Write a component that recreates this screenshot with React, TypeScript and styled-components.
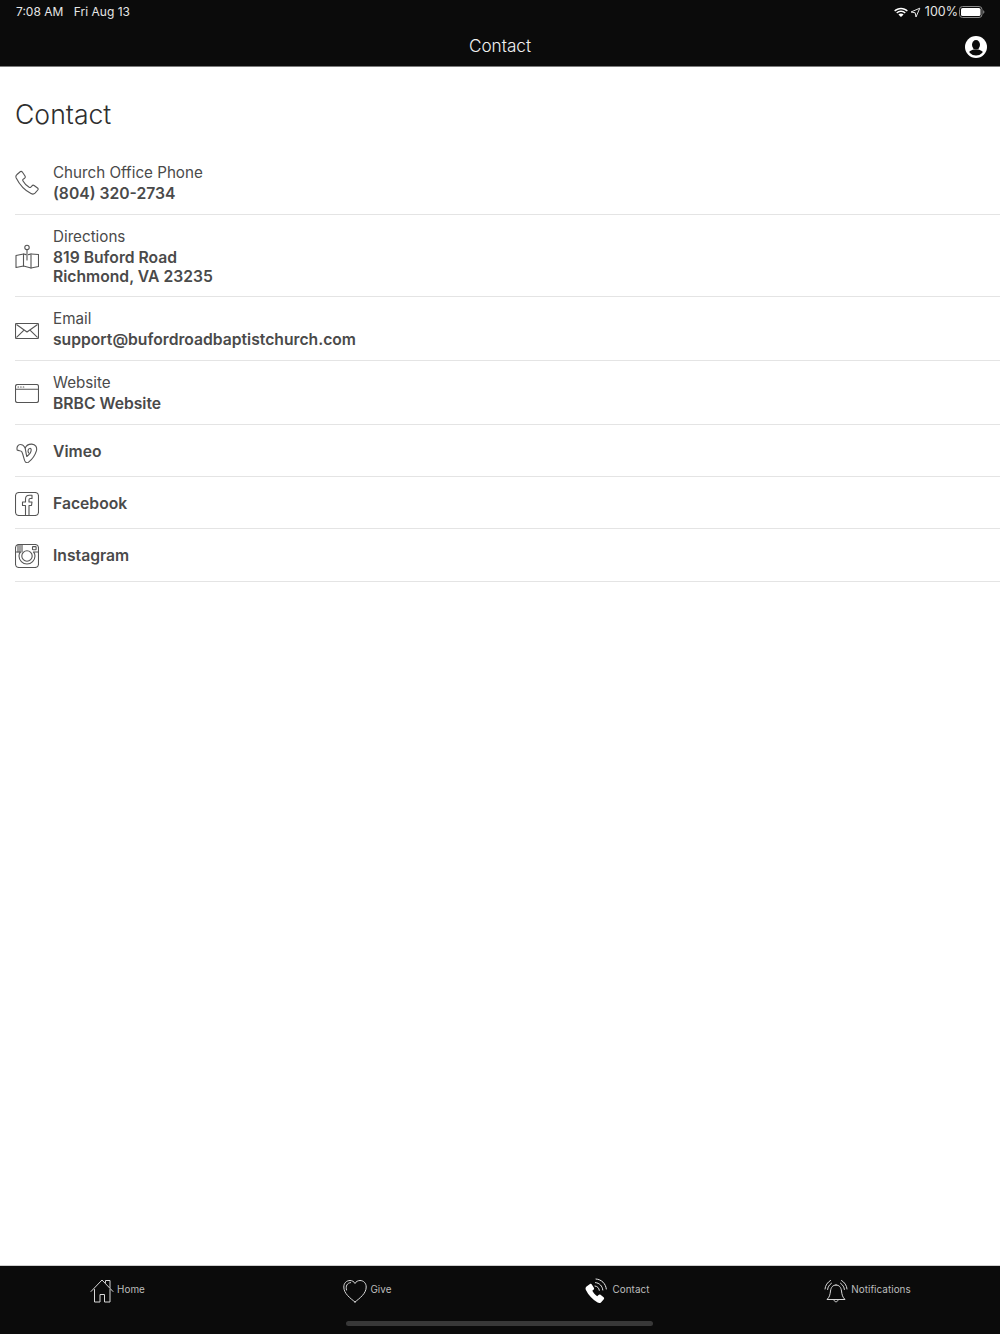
import React from "react";
import styled, { createGlobalStyle } from "styled-components";

const Global = createGlobalStyle`
  html, body { margin: 0; padding: 0; background: #fff; }
  body { font-family: Inter, "Liberation Sans", sans-serif; }
`;

const Page = styled.div`
  width: 1000px;
  height: 1334px;
  display: flex;
  flex-direction: column;
  background: #fff;
  overflow: hidden;
`;

const Header = styled.header`
  height: 67px;
  flex: none;
  background: #0b0b0b;
  border-bottom: 1px solid #7c7c7c;
  color: #fff;
  display: flex;
  flex-direction: column;
  box-sizing: border-box;
`;

const StatusBar = styled.div`
  height: 24px;
  flex: none;
  padding: 0 15px 0 16px;
  display: flex;
  align-items: center;
  justify-content: space-between;
  font-size: 12px;
  line-height: 24px;
  color: #e6e6e6;
`;

const StatusLeft = styled.div`
  display: flex;
  gap: 10.5px;
`;

const StatusRight = styled.div`
  display: flex;
  align-items: center;
`;

const Percent = styled.span`
  font-size: 12.5px;
  margin: 0 1px 0 4px;
`;

const ArrowIcon = styled.svg`
  margin-left: 2px;
`;

const NavBar = styled.div`
  flex: 1;
  display: flex;
  align-items: center;
  justify-content: space-between;
  padding: 0 12px 0 60px;
`;

const NavTitle = styled.div`
  flex: 1;
  text-align: center;
  font-size: 17.2px;
  font-weight: 300;
  color: #f0f0f0;
`;

const Avatar = styled.svg`
  width: 24px;
  height: 24px;
  margin-left: 24px;
  margin-top: 3px;
`;

const Main = styled.main`
  flex: 1;
  padding: 30px 0 0 15px;
`;

const Title = styled.h1`
  margin: 0 0 19px;
  height: 34px;
  font-size: 26.6px;
  line-height: 34px;
  font-weight: 300;
  color: #2e2e2e;
`;

const List = styled.ul`
  margin: 0;
  padding: 0;
  list-style: none;
`;

const Row = styled.li<{ $h: number }>`
  height: ${(p) => p.$h}px;
  box-sizing: border-box;
  border-bottom: 1px solid #e4e4e4;
  display: flex;
  align-items: center;
  color: #4a4a4a;
`;

const IconBox = styled.div<{ $drop: number }>`
  width: 38px;
  flex: none;
  display: flex;
  align-items: center;
  padding-top: ${(p) => p.$drop * 2}px;
  svg { display: block; }
`;

const Text = styled.div`
  display: flex;
  flex-direction: column;
  padding-top: 1px;
`;

const Label = styled.div`
  font-size: 15.2px;
  line-height: 21px;
  font-weight: 400;
`;

const Value = styled.div`
  font-size: 15.7px;
  line-height: 18.6px;
  font-weight: 600;
  margin-top: 2px;
`;

const TabBar = styled.nav`
  height: 68px;
  flex: none;
  background: #0b0b0b;
  box-shadow: 0 -1px 0 #cfcfcf;
  position: relative;
  display: grid;
  grid-template-columns: repeat(4, 1fr);
  align-items: start;
`;

const Tab = styled.div`
  height: 46px;
  padding-right: 15px;
  display: flex;
  align-items: center;
  justify-content: center;
  gap: 3px;
  font-size: 9.9px;
  letter-spacing: 0.05px;
  color: #bdbdbd;
  svg { display: block; margin-top: 4px; }
`;

const HomeIndicator = styled.div`
  position: absolute;
  left: 346px;
  top: 55px;
  width: 307px;
  height: 5px;
  border-radius: 3px;
  background: #383838;
`;

const s = { fill: "none", stroke: "#555", strokeWidth: 1.1, strokeLinejoin: "round" as const, strokeLinecap: "round" as const };

const PhoneIcon = () => (
  <svg width="24" height="26" viewBox="0 0 24 26" {...s}>
    <path d="M2 4.5 L5.5 1.5 C6.5 1 7 1.5 7.5 2.2 L10 6 C10.5 7 10.3 7.6 9.6 8.2 L8 9.4 C7.6 9.8 7.6 10.3 8 10.9 C9.5 13.5 11.5 15.6 14.2 17.3 C14.9 17.7 15.4 17.6 15.8 17.2 L17 15.8 C17.6 15.1 18.3 15 19.1 15.5 L22.5 18 C23.2 18.6 23.4 19.3 22.8 20 L20 23.2 C19 24.2 17.6 24.4 16 23.6 C9.5 20.2 4.5 14.5 1.2 8 C0.6 6.6 1 5.3 2 4.5 Z" />
  </svg>
);

const MapIcon = () => (
  <svg width="24" height="26" viewBox="0 0 24 26" {...s}>
    <circle cx="12" cy="3.4" r="2.2" />
    <path d="M12 5.6 V16" />
    <path d="M8.5 10 L1 11.5 V23.5 L8.5 22 L16 24 L23.5 22.5 V10.5 L16 10" />
    <path d="M8.5 10 V22 M16 11 V24 M9 10 L11 10.6 M13.5 10.6 L16 10" />
  </svg>
);

const MailIcon = () => (
  <svg width="24" height="16" viewBox="0 0 24 16" {...s}>
    <rect x="0.5" y="0.5" width="23" height="15" rx="1" />
    <path d="M1.8 1.8 L12 9 L22.2 1.8 M1.8 14.2 L9 7.2 M22.2 14.2 L15 7.2" />
  </svg>
);

const WindowIcon = () => (
  <svg width="24" height="19" viewBox="0 0 24 19" {...s}>
    <rect x="0.5" y="0.5" width="23" height="18" rx="2" />
    <path d="M0.5 5.2 H23.5" />
    <path d="M3 3 H3.6 M5.6 3 H6.2 M8.2 3 H8.8" />
  </svg>
);

const VimeoIcon = () => (
  <svg width="24" height="24" viewBox="0 0 24 24" {...s}>
    <g transform="translate(0 4.5)">
      <path d="M2.2 6.5 C1.4 3.6 3 0.9 5.6 1 C7.6 1 9 2.2 10.2 4.6 C11.2 2 13.8 0.5 16.8 0.6 C20.4 0.8 22.4 3.6 21.4 7.4 C20 12 16 16.8 13.6 18.6 C12 19.8 10.6 19.2 9.8 17.4 C8.6 14.4 8.2 11 6.8 8.2 C6 6.8 3.8 7.6 2.2 6.5 Z" />
      <path d="M10.2 4.6 C10.8 8 11 10 11.8 13 C13.6 11.6 16.4 8.4 16.2 6 C16 4.4 13.8 4.6 13.2 6.4 C12.8 7.6 13 8.4 13.6 9.4" />
    </g>
  </svg>
);

const FacebookIcon = () => (
  <svg width="24" height="24" viewBox="0 0 24 24" {...s}>
    <rect x="0.5" y="0.5" width="23" height="23" rx="3.5" />
    <path d="M10.5 23.5 V13.5 H7.5 V10 H10.5 V7 C10.5 4.5 12 3.2 14.5 3.2 H17 V6.5 H15.2 C14.4 6.5 14 6.9 14 7.8 V10 H17 L16.5 13.5 H14 V23.5" />
  </svg>
);

const InstagramIcon = () => (
  <svg width="24" height="24" viewBox="0 0 24 24" {...s}>
    <rect x="0.5" y="0.5" width="23" height="23" rx="3.5" />
    <path d="M0.5 8 H5.5 C4.5 9 4 10.5 4 12 C4 16.4 7.6 20 12 20 C16.4 20 20 16.4 20 12 C20 10.5 19.5 9 18.5 8 H23.5" />
    <circle cx="12" cy="12" r="5.2" />
    <rect x="17.5" y="2.6" width="3.6" height="3.2" rx="0.6" />
    <path d="M3 0.8 V8 M5 0.8 V8 M7 0.8 V8" />
  </svg>
);

const t = { fill: "none", stroke: "#d8d8d8", strokeWidth: 1, strokeLinejoin: "round" as const, strokeLinecap: "round" as const };

const HomeTab = () => (
  <svg width="24" height="24" viewBox="0 0 24 24" {...t}>
    <path d="M1 12.5 L12 1 L23 12.5" />
    <path d="M15.5 3.5 V1.5 H20 V8.5" />
    <path d="M4.5 10.5 V23 H10 V15.5 H14.5 V23 H20 V10.5" />
  </svg>
);

const HeartTab = () => (
  <svg width="24" height="24" viewBox="0 0 24 24" {...t}>
    <path d="M12 23 C7 19 0.8 14.5 0.8 8 C0.8 4 3.6 1.5 7 1.5 C9 1.5 11 2.5 12 4.5 C13 2.5 15 1.5 17 1.5 C20.4 1.5 23.2 4 23.2 8 C23.2 14.5 17 19 12 23 Z" />
    <path d="M3.5 11 C2.5 7 4 4 7.5 3.6" />
  </svg>
);

const CallTab = () => (
  <svg width="24" height="26" viewBox="0 0 24 26">
    <path fill="#fff" d="M1.5 8.5 L5 6 C5.8 5.6 6.4 5.8 6.8 6.5 L9 10 C9.3 10.7 9.1 11.3 8.5 11.8 L7.3 12.8 C8.5 15 10 16.7 12.2 18.3 L13.5 17 C14.1 16.4 14.8 16.3 15.5 16.8 L18.6 19.2 C19.2 19.8 19.3 20.5 18.8 21.2 L16.2 24.2 C15.2 25.2 14 25.3 12.6 24.6 C7.5 21.6 3.4 17 0.9 12 C0.3 10.8 0.5 9.3 1.5 8.5 Z" />
    <g fill="none" stroke="#e8e8e8" strokeWidth="1" strokeLinecap="round">
      <path d="M10 8 C12.5 8.3 14 10 14.3 12.3" />
      <path d="M10.5 4.6 C14.5 5 17.4 8 17.8 12" />
      <path d="M11 1 C16.5 1.4 20.8 5.6 21.3 11" />
    </g>
  </svg>
);

const BellTab = () => (
  <svg width="24" height="24" viewBox="0 0 24 24" {...t}>
    <path d="M12 6 C8.5 6 7 8.5 6.5 12 C6 16 5.5 18 3 20.5 H21 C18.5 18 18 16 17.5 12 C17 8.5 15.5 6 12 6 Z" />
    <path d="M10 21 C10 23.5 14 23.5 14 21" />
    <path d="M1 10 C1.2 6.5 3.5 3.2 6.5 1.5 M3.6 10.5 C3.8 8 5.2 6 7.5 4.2" />
    <path d="M23 10 C22.8 6.5 20.5 3.2 17.5 1.5 M20.4 10.5 C20.2 8 18.8 6 16.5 4.2" />
  </svg>
);

const rows: { h: number; drop: number; icon: React.ReactNode; label?: string; value: React.ReactNode }[] = [
  { h: 65, drop: 1, icon: <PhoneIcon />, label: "Church Office Phone", value: "(804) 320-2734" },
  { h: 82, drop: 1, icon: <MapIcon />, label: "Directions", value: <>819 Buford Road<br />Richmond, VA 23235</> },
  { h: 64, drop: 2, icon: <MailIcon />, label: "Email", value: "support@bufordroadbaptistchurch.com" },
  { h: 64, drop: 1, icon: <WindowIcon />, label: "Website", value: "BRBC Website" },
  { h: 52, drop: 0, icon: <VimeoIcon />, value: "Vimeo" },
  { h: 52, drop: 1, icon: <FacebookIcon />, value: "Facebook" },
  { h: 53, drop: 1, icon: <InstagramIcon />, value: "Instagram" },
];

export default function App() {
  return (
    <Page>
      <Global />
      <Header>
        <StatusBar>
          <StatusLeft>
            <span>7:08 AM</span>
            <span>Fri Aug 13</span>
          </StatusLeft>
          <StatusRight>
            <svg width="14" height="11" viewBox="0 0 15 11">
              <path fill="#fff" d="M7.5 2 C10 2 12.2 3 13.8 4.5 L14.8 3.4 C12.9 1.5 10.3 0.4 7.5 0.4 C4.7 0.4 2.1 1.5 0.2 3.4 L1.2 4.5 C2.8 3 5 2 7.5 2 Z M7.5 5 C9 5 10.4 5.6 11.5 6.6 L12.6 5.5 C11.2 4.2 9.5 3.4 7.5 3.4 C5.5 3.4 3.8 4.2 2.4 5.5 L3.5 6.6 C4.6 5.6 6 5 7.5 5 Z M7.5 10.4 L10.3 7.7 C9.5 7 8.6 6.6 7.5 6.6 C6.4 6.6 5.5 7 4.7 7.7 Z" />
            </svg>
            <ArrowIcon width="11" height="11" viewBox="0 0 11 11">
              <path fill="none" stroke="#e6e6e6" strokeWidth="1" strokeLinejoin="round" d="M9.8 1.2 L1 5 L5.2 5.8 L6 10 Z" />
            </ArrowIcon>
            <Percent>100%</Percent>
            <svg width="26" height="12" viewBox="0 0 26 12">
              <rect x="0.5" y="0.5" width="22.5" height="11" rx="3" fill="none" stroke="#8a8a8a" />
              <rect x="2" y="2" width="19.5" height="8" rx="1.6" fill="#fff" />
              <path d="M24.2 4.2 C25 4.5 25.4 5.2 25.4 6 C25.4 6.8 25 7.5 24.2 7.8 Z" fill="#8a8a8a" />
            </svg>
          </StatusRight>
        </StatusBar>
        <NavBar>
          <NavTitle>Contact</NavTitle>
          <Avatar viewBox="0 0 24 24">
            <defs>
              <clipPath id="av"><circle cx="12" cy="12" r="8.6" /></clipPath>
            </defs>
            <circle cx="12" cy="12" r="11" fill="#fff" />
            <g clipPath="url(#av)" fill="#0b0b0b">
              <ellipse cx="12" cy="9.8" rx="4" ry="4.8" />
              <path d="M3 22 C3 17 7 15.5 9.8 14.5 H14.2 C17 15.5 21 17 21 22 Z" />
            </g>
          </Avatar>
        </NavBar>
      </Header>
      <Main>
        <Title>Contact</Title>
        <List>
          {rows.map((r) => (
            <Row key={r.h + String(r.label) + String(r.value)} $h={r.h}>
              <IconBox $drop={r.drop}>{r.icon}</IconBox>
              <Text>
                {r.label && <Label>{r.label}</Label>}
                <Value>{r.value}</Value>
              </Text>
            </Row>
          ))}
        </List>
      </Main>
      <TabBar>
        <Tab><HomeTab />Home</Tab>
        <Tab><HeartTab />Give</Tab>
        <Tab><CallTab />Contact</Tab>
        <Tab><BellTab />Notifications</Tab>
        <HomeIndicator />
      </TabBar>
    </Page>
  );
}
